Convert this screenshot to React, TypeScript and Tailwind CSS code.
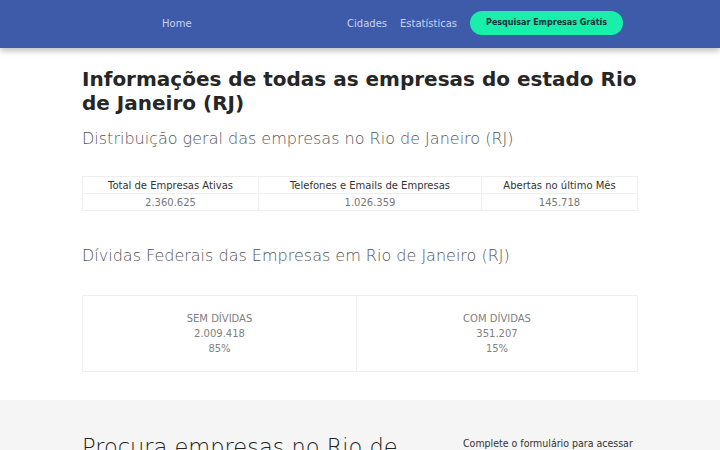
export default function App() {
  const stats = [
    { label: "Total de Empresas Ativas", value: "2.360.625", w: "w-[175px]" },
    { label: "Telefones e Emails de Empresas", value: "1.026.359", w: "w-[223px]" },
    { label: "Abertas no último Mês", value: "145.718", w: "flex-1" },
  ];

  return (
    <div className="min-h-[450px] bg-white font-['DejaVu_Sans',sans-serif] text-[#333]">
      {/* top bar */}
      <header className="relative z-10 h-[48px] bg-[#3d5ba9] shadow-[0_3px_6px_rgba(0,0,0,0.25)]">
        <div className="mx-auto flex h-full w-[556px] items-center pb-[2px] pl-[80px] pr-[15px] text-[10px] text-[#c9d3ee]">
          <a href="#">Home</a>
          <nav className="ml-auto flex items-center gap-[13px]">
            <a href="#">Cidades</a>
            <a href="#">Estatísticas</a>
            <button className="h-[24px] rounded-full bg-[#19eeaa] px-[16px] text-[8px] font-bold text-[#13303a]">
              Pesquisar Empresas Grátis
            </button>
          </nav>
        </div>
      </header>

      <main className="mx-auto w-[556px] pt-[19px]">
        <h1 className="text-[20px] font-bold leading-[24px] text-[#262626]">
          Informações de todas as empresas do estado Rio de Janeiro (RJ)
        </h1>
        <h2 className="mt-[12px] text-[16px] font-extralight leading-[24px] text-[#555]">
          Distribuição geral das empresas no Rio de Janeiro (RJ)
        </h2>

        <div className="mt-[25px] flex border border-[#eee] text-[10px]">
          {stats.map((s, i) => (
            <div key={s.label} className={`${s.w} ${i > 0 ? "border-l border-[#eee]" : ""}`}>
              <div className="flex h-[17px] items-center justify-center border-b border-[#eee] text-[#333]">
                {s.label}
              </div>
              <div className="flex h-[16px] items-center justify-center text-[#777]">{s.value}</div>
            </div>
          ))}
        </div>

        <h2 className="mt-[33px] text-[16px] font-extralight leading-[24px] text-[#555]">
          Dívidas Federais das Empresas em Rio de Janeiro (RJ)
        </h2>

        <div className="mt-[27px] flex h-[77px] border border-[#eee] text-[10px] leading-[15px] text-[#808080]">
          <div className="flex w-[273px] flex-col items-center justify-center">
            <span>SEM DÍVIDAS</span>
            <span>2.009.418</span>
            <span>85%</span>
          </div>
          <div className="flex flex-1 flex-col items-center justify-center border-l border-[#eee]">
            <span>COM DÍVIDAS</span>
            <span>351.207</span>
            <span>15%</span>
          </div>
        </div>
      </main>

      <section className="mt-[28px] h-[50px] overflow-hidden bg-[#f5f5f5]">
        <div className="mx-auto flex w-[556px] pt-[33px]">
          <h3 className="w-[381px] pr-[40px] text-[22.5px] font-extralight leading-[28px] text-[#222]">
            Procura empresas no Rio de Janeiro
          </h3>
          <p className="pt-[3px] font-['DejaVu_Sans_Condensed','DejaVu_Sans',sans-serif] text-[10.5px] text-[#333]">
            Complete o formulário para acessar
          </p>
        </div>
      </section>
    </div>
  );
}
